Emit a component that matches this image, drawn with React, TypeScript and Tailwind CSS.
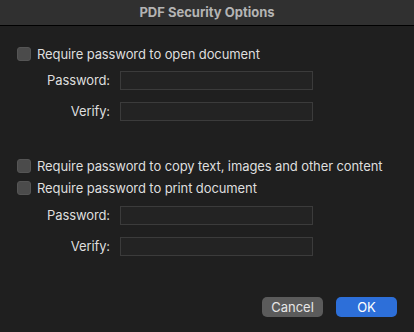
import type React from "react";

const font = { fontFamily: "Inter, 'Liberation Sans', sans-serif" };

function Check({ label }: { label: string }) {
  return (
    <label className="flex items-center h-[14px] gap-[6px]">
      <span className="w-[14px] h-[14px] rounded-[3px] bg-[#4b4b4b] border border-[#555555] shrink-0" />
      <span className="text-[13px] tracking-[-0.1px] text-[#dedede] leading-none">{label}</span>
    </label>
  );
}

function Field({ label }: { label: string }) {
  return (
    <div className="flex items-center h-[19px]">
      <span className="w-[93px] text-right text-[13px] tracking-[-0.1px] text-[#dedede] leading-none">{label}</span>
      <div className="ml-[10px] w-[193px] h-[19px] bg-[#232323] border border-[#3b3b3b]" />
    </div>
  );
}

export default function App(): React.ReactElement {
  return (
    <div className="w-[414px] h-[332px] bg-[#1f1f1f] flex flex-col overflow-hidden" style={font}>
      <div className="h-[26px] bg-[#303030] border-b border-black flex items-center justify-center shrink-0">
        <span className="text-[13px] font-bold text-[#b4b4b4] leading-none">PDF Security Options</span>
      </div>
      <div className="flex flex-col pt-[21px] pl-[17px]">
        <Check label="Require password to open document" />
        <div className="flex flex-col gap-[12px] mt-[10px]">
          <Field label="Password:" />
          <Field label="Verify:" />
        </div>
        <div className="mt-[38px] flex flex-col gap-[8px]">
          <Check label="Require password to copy text, images and other content" />
          <Check label="Require password to print document" />
        </div>
        <div className="flex flex-col gap-[12px] mt-[11px]">
          <Field label="Password:" />
          <Field label="Verify:" />
        </div>
      </div>
      <div className="flex justify-end gap-[13px] pr-[17px] mt-auto mb-[15px]">
        <button className="w-[61px] h-[20px] rounded-[5px] bg-[#5b5b5b] text-[13px] text-[#e6e6e6] leading-none">
          Cancel
        </button>
        <button className="w-[61px] h-[20px] rounded-[5px] bg-[#2d6fd9] text-[13px] text-white leading-none">
          OK
        </button>
      </div>
    </div>
  );
}
